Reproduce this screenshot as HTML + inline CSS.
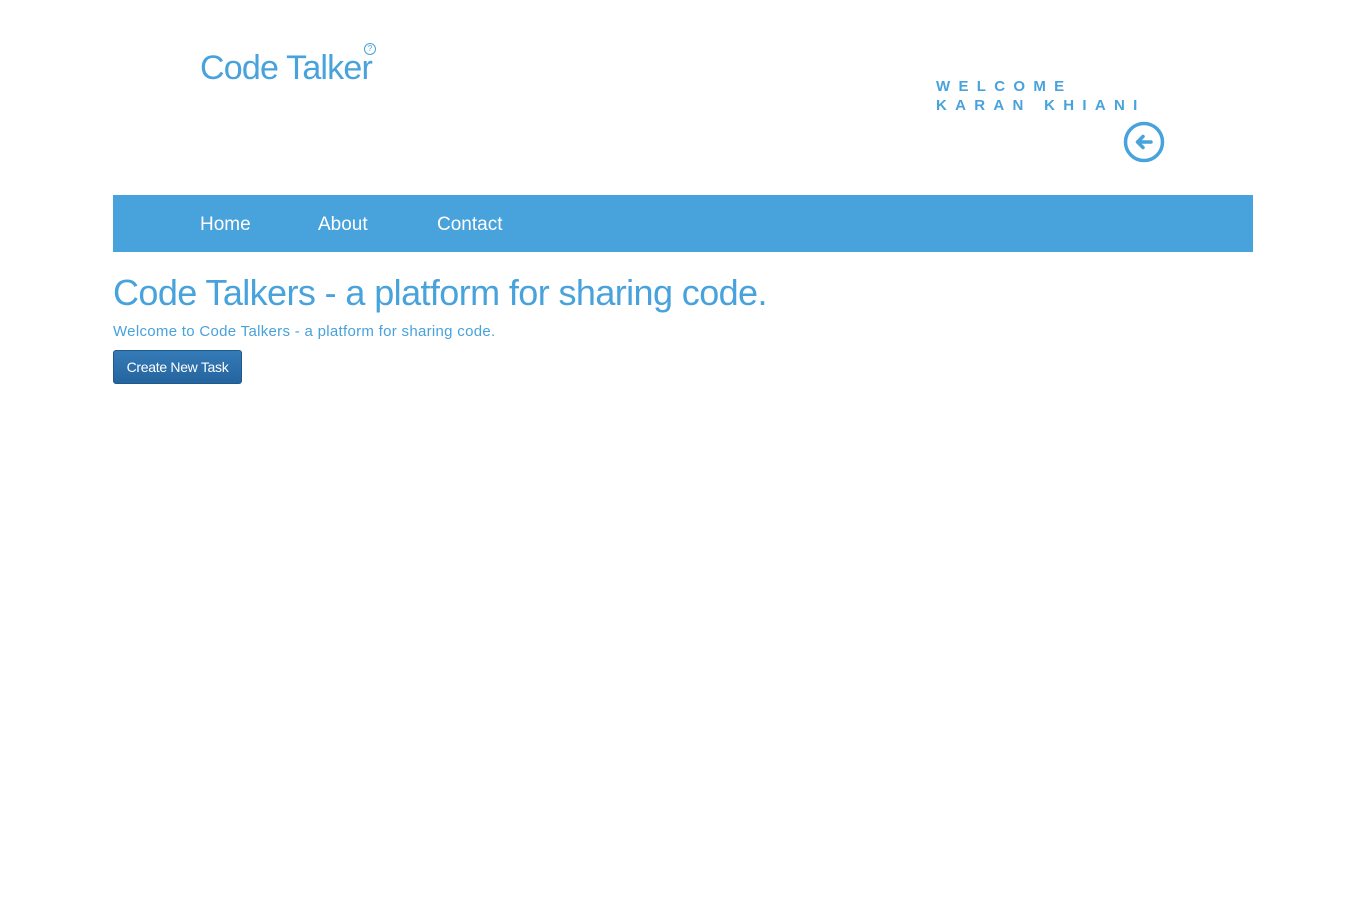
<!DOCTYPE html>
<html><head><style>
body{margin:0;background:#fff;font-family:"Liberation Sans",sans-serif;color:#48a2db;}
.logo{position:absolute;left:200px;top:49px;font-size:34px;letter-spacing:-0.8px;}
.q{position:absolute;left:364px;top:43px;width:10px;height:10px;border:1px solid #48a2db;border-radius:50%;font-size:8px;line-height:10px;text-align:center;}
.wel{position:absolute;left:936px;top:77px;font-size:15px;font-weight:bold;letter-spacing:8.3px;line-height:19px;}
.nav{position:absolute;left:113px;top:195px;width:1140px;height:57px;background:#48a2db;}
.nav a{position:absolute;top:19px;color:#fff;font-size:19px;text-decoration:none;}
h1{position:absolute;left:113px;top:272px;margin:0;font-size:36px;font-weight:normal;letter-spacing:-0.6px;}
p{position:absolute;left:113px;top:323px;margin:0;font-size:15px;letter-spacing:0.3px;}
.btn{position:absolute;left:113px;top:350px;width:127px;height:32px;border:1px solid #1f5a8c;border-radius:3px;background:linear-gradient(#347bb7,#25649e);color:#fff;font-size:14px;line-height:32px;text-align:center;letter-spacing:-0.3px;}
</style></head><body>
<div class="logo">Code Talker</div><div class="q">?</div>
<div class="wel">WELCOME<br>KARAN KHIANI</div>
<svg style="position:absolute;left:1123px;top:121px" width="42" height="42" viewBox="0 0 42 42"><circle cx="21" cy="21" r="18.5" fill="none" stroke="#48a2db" stroke-width="3.5"/><path d="M28 21H15M20 15.5L14.5 21L20 26.5" fill="none" stroke="#48a2db" stroke-width="3.5" stroke-linecap="round" stroke-linejoin="round"/></svg>
<div class="nav"><a style="left:87px">Home</a><a style="left:205px">About</a><a style="left:324px">Contact</a></div>
<h1>Code Talkers - a platform for sharing code.</h1>
<p>Welcome to Code Talkers - a platform for sharing code.</p>
<div class="btn">Create New Task</div>
</body></html>
